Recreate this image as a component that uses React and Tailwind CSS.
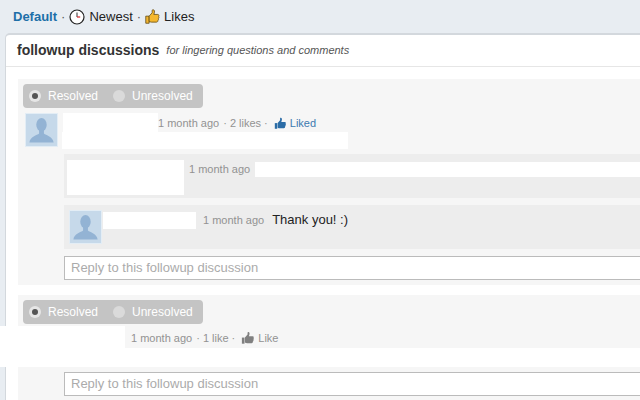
const sans = 'font-["Liberation_Sans",Arial,sans-serif]'

function Thumb({ className }) {
  return (
    <svg viewBox="0 0 16 16" className={className}>
      <path d="M1 7.5h3v7H1z" fill="currentColor" />
      <path d="M4.5 7.5 7.5 4V1.6c0-.8 1.9-.9 2.2.6.2 1.1-.2 2.6-.7 3.8h4.4c1.2 0 1.5 1.2.9 1.9.6.6.5 1.6-.2 2 .4.7.2 1.6-.5 1.9.2.9-.3 2.1-1.5 2.1H7c-1 0-1.6-.5-2.5-.8z" fill="currentColor" />
    </svg>
  )
}

function GoldThumb() {
  return (
    <svg viewBox="0 0 16 16" className="w-[15px] h-[15px]">
      <path d="M.8 7.6h3.6v7.6H.8z" fill="#f2b632" stroke="#5a4410" strokeWidth="0.8" />
      <path d="M4.4 7.6 7.6 4V1.4c0-.8 2.2-.9 2.5.6.2 1.2-.2 2.7-.7 3.8h4.2c1.2 0 1.6 1.3.9 2 .6.7.5 1.6-.2 2.1.4.7.2 1.6-.5 1.9.2 1-.3 2.2-1.5 2.2H7c-1 0-1.7-.4-2.6-.7z" fill="#f5b82e" stroke="#5a4410" strokeWidth="0.8" />
    </svg>
  )
}

function Clock() {
  return (
    <svg viewBox="0 0 16 16" className="w-[16px] h-[16px]">
      <circle cx="8" cy="8" r="7" fill="#fff" stroke="#222" strokeWidth="1.2" />
      <path d="M8 3.5V8" stroke="#333" strokeWidth="1" fill="none" />
      <path d="M8 8h3.2" stroke="#d8232a" strokeWidth="1.2" fill="none" />
    </svg>
  )
}

function Avatar() {
  return (
    <div className="w-[33px] h-[34px] shrink-0 border border-[#e3edf5] bg-[#c6d9ea]">
      <svg viewBox="0 0 32 32" className="w-full h-full">
        <ellipse cx="16" cy="10.5" rx="5.4" ry="7" fill="#93b3d4" />
        <path d="M13.5 16v3.5c-2 2-9.5 3-10 9.5h25c-.5-6.5-8-7.5-10-9.5V16z" fill="#93b3d4" />
      </svg>
    </div>
  )
}

function ResolvedBar() {
  return (
    <div className="w-[180px] h-6 rounded bg-[#c4c4c4] flex items-center pl-[6px] text-[12px] text-white">
      <span className="w-3 h-3 rounded-full bg-[#e6e6e6] flex items-center justify-center">
        <span className="w-[6px] h-[6px] rounded-full bg-[#555]" />
      </span>
      <span className="ml-[7px]">Resolved</span>
      <span className="ml-[15px] w-3 h-3 rounded-full bg-[#dadada]" />
      <span className="ml-[7px]">Unresolved</span>
    </div>
  )
}

function ReplyBox() {
  return (
    <div className="h-[24px] ml-[41px] mr-[-4px] bg-white border border-[#bbb] flex items-center pl-[6px] text-[13px] text-[#ababab]">
      Reply to this followup discussion
    </div>
  )
}

export default function App() {
  return (
    <div className={`${sans} w-[640px] h-[400px] overflow-hidden bg-[#e8edf2]`}>
      <div className="h-[33px] pl-[13px] flex items-center text-[13px] text-[#222]">
        <span className="font-bold text-[#1d6fa8]">Default</span>
        <span className="mx-[4px] text-[#555]">·</span>
        <Clock />
        <span className="ml-[4px]">Newest</span>
        <span className="mx-[4px] text-[#555]">·</span>
        <GoldThumb />
        <span className="ml-[4px]">Likes</span>
      </div>

      <div className="ml-[5px] h-[367px] bg-white border-l border-t-2 border-[#d3d8dd] rounded-tl-[5px]">
        <div className="h-[32px] pl-[11px] flex items-center border-b border-[#e6e6e6]">
          <span className="font-bold text-[14px] text-[#333]">followup discussions</span>
          <span className="ml-[7px] italic text-[11px] text-[#555]">for lingering questions and comments</span>
        </div>

        {/* first discussion */}
        <div className="mt-[12px] ml-[12px] h-[206px] bg-[#f6f6f6] pt-[5px] pl-[5px]">
          <ResolvedBar />
          <div className="relative mt-[5px] h-[41px] flex">
            <div className="ml-[2px]"><Avatar /></div>
            <div className="ml-[5px] w-[95px] h-[36px] bg-white" />
            <div className="pt-[3px] text-[11px] text-[#929292] flex items-center h-[18px]">
              <span>1 month ago</span>
              <span className="ml-[4px]">· 2 likes ·</span>
              <Thumb className="ml-[6px] w-[13px] h-[13px] text-[#2b6ca6]" />
              <span className="ml-[3px] text-[#3d7ab0]">Liked</span>
            </div>
            <div className="absolute left-[39px] top-[19px] w-[286px] h-[17px] bg-white" />
          </div>

          <div className="ml-[41px] h-[44px] bg-[#ededed] flex relative">
            <div className="ml-[3px] mt-[6px] w-[117px] h-[35px] bg-white" />
            <span className="ml-[5px] mt-[7px] text-[11px] text-[#929292]">1 month ago</span>
            <div className="ml-[5px] mt-[8px] flex-1 h-[15px] bg-white" />
          </div>

          <div className="mt-[7px] ml-[41px] h-[44px] bg-[#ededed] flex">
            <div className="ml-[5px] mt-[5px]"><Avatar /></div>
            <div className="ml-px w-[93px] h-[17px] mt-[7px] bg-white" />
            <span className="ml-[7px] mt-[7px] text-[11px] text-[#929292]">1 month ago</span>
            <span className="ml-[8px] mt-[5px] text-[13px] text-[#222]">Thank you! :)</span>
          </div>

          <div className="mt-[7px]"><ReplyBox /></div>
        </div>

        {/* second discussion */}
        <div className="relative mt-[10px] ml-[12px] h-[105px] bg-[#f6f6f6] pt-[5px] pl-[5px]">
          <ResolvedBar />
          <div className="mt-[6px] ml-[108px] text-[11px] text-[#929292] flex items-center h-[16px]">
            <span>1 month ago</span>
            <span className="ml-[4px]">· 1 like ·</span>
            <Thumb className="ml-[6px] w-[14px] h-[14px] text-[#808080]" />
            <span className="ml-[3px]">Like</span>
          </div>
          <div className="absolute left-0 right-0 top-[53px] h-[19px] bg-white" />
          <div className="absolute left-[-18px] w-[125px] top-[31px] h-[41px] bg-white" />
          <div className="mt-[26px]"><ReplyBox /></div>
        </div>
      </div>
    </div>
  )
}
